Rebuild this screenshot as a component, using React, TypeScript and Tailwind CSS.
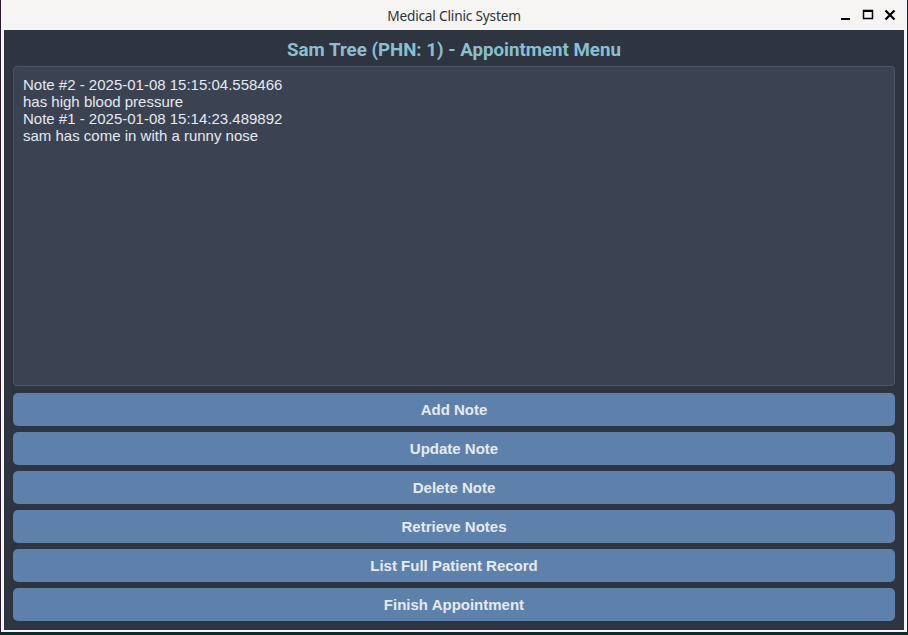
import React from "react";

const buttons = [
  "Add Note",
  "Update Note",
  "Delete Note",
  "Retrieve Notes",
  "List Full Patient Record",
  "Finish Appointment",
];

export default function App() {
  return (
    <div className="w-[908px] h-[635px] bg-[#0e2a2c] overflow-hidden">
      <div className="w-[907px] h-[632px] bg-[#f6f5f4] flex flex-col pl-[3px] pr-[3px] pb-[2px] border-l border-[#2a1a2e]">
        <div className="h-[30px] flex items-center relative shrink-0 pt-[2px]">
          <div className="flex-1 text-center text-[13.7px] text-[#2e3436] font-['Noto_Sans',sans-serif] tracking-[-0.2px]">
            Medical Clinic System
          </div>
          <div className="absolute right-[8px] top-[9px] flex items-center gap-[10px]">
            <svg width="12" height="12" viewBox="0 0 12 12">
              <rect x="1" y="9" width="9" height="2" fill="#000" />
            </svg>
            <svg width="12" height="12" viewBox="0 0 12 12">
              <rect x="1.5" y="1.5" width="9" height="8" fill="none" stroke="#000" strokeWidth="1.5" />
              <rect x="1" y="1" width="10" height="2" fill="#000" />
            </svg>
            <svg width="12" height="12" viewBox="0 0 12 12">
              <path d="M1.5 1.5 L10.5 10.5 M10.5 1.5 L1.5 10.5" stroke="#000" strokeWidth="2.2" />
            </svg>
          </div>
        </div>
        <div className="flex-1 bg-[#2e3440] flex flex-col px-[9px] pb-[8px]">
          <div className="h-[36px] flex items-center justify-center pt-[4px] text-[18.7px] font-bold text-[#88c0d0] font-['Roboto',sans-serif]">
            Sam Tree (PHN: 1) - Appointment Menu
          </div>
          <div className="h-[320px] bg-[#3b4252] border border-[#4c566a] rounded-[4px] px-[9px] pt-[9px] text-[15px] leading-[17px] text-[#e5e9f0] font-['Liberation_Sans',sans-serif]">
            <div>Note #2 - 2025-01-08 15:15:04.558466</div>
            <div>has high blood pressure</div>
            <div>Note #1 - 2025-01-08 15:14:23.489892</div>
            <div>sam has come in with a runny nose</div>
          </div>
          <div className="flex flex-col gap-[6px] mt-[7px]">
            {buttons.map((b) => (
              <div
                key={b}
                className="h-[33px] bg-[#5e81ac] rounded-[5px] flex items-center justify-center pt-[1px] text-[15px] font-bold text-[#e5e9f0] font-['Liberation_Sans',sans-serif]"
              >
                {b}
              </div>
            ))}
          </div>
        </div>
      </div>
    </div>
  );
}
